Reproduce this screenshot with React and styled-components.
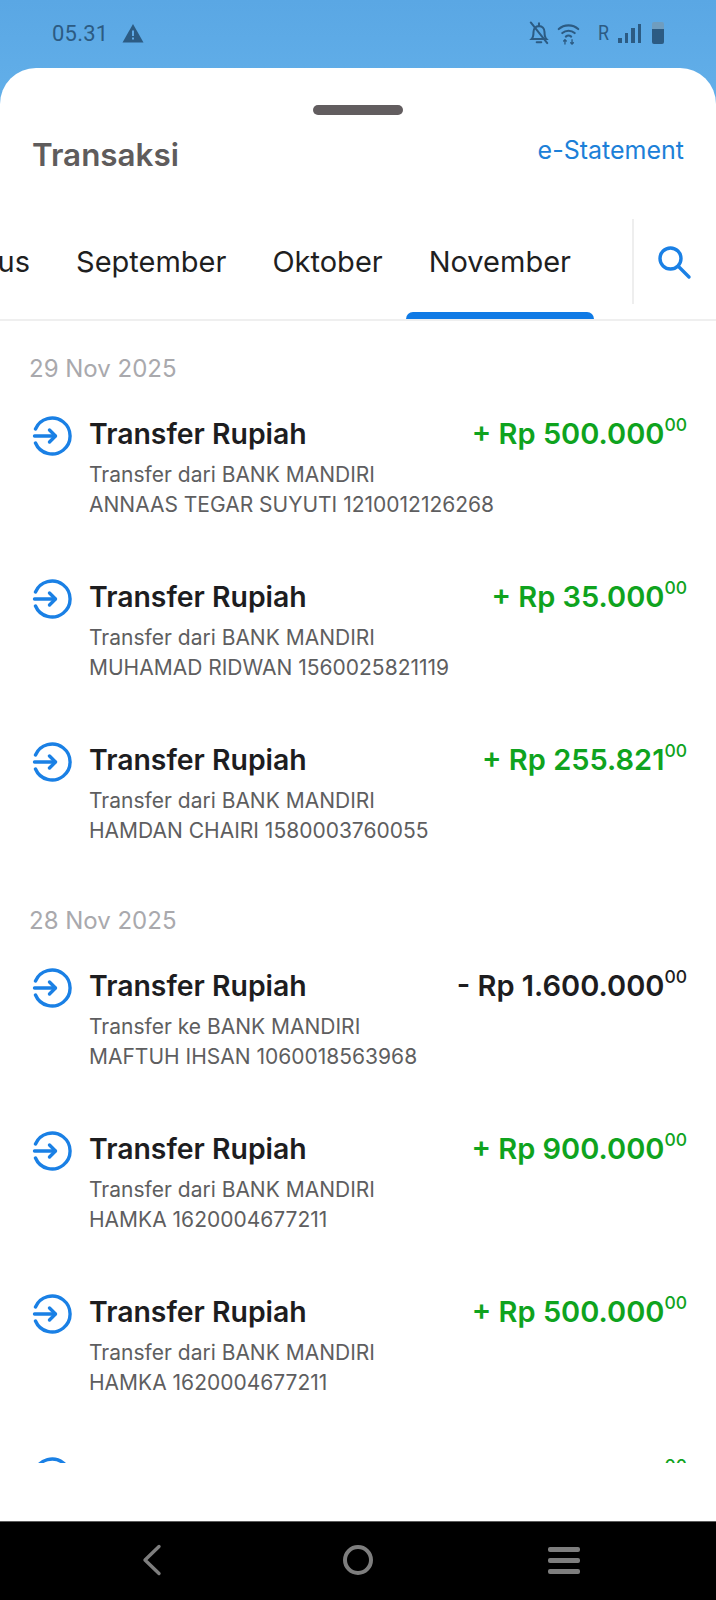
import React from 'react'
import styled, { createGlobalStyle } from 'styled-components'

const GlobalStyle = createGlobalStyle`
    html, body {
        margin: 0;
        padding: 0;
        background: #000;
    }
    body {
        font-family: "Inter", "Noto Sans", "Liberation Sans", sans-serif;
    }
`

const months = [
    { name: 'Agustus' },
    { name: 'September' },
    { name: 'Oktober' },
    { name: 'November', active: true },
]

const groups = [
    {
        date: '29 Nov 2025',
        items: [
            { amount: '+ Rp 500.000', line1: 'Transfer dari BANK MANDIRI', line2: 'ANNAAS TEGAR SUYUTI 1210012126268', income: true },
            { amount: '+ Rp 35.000', line1: 'Transfer dari BANK MANDIRI', line2: 'MUHAMAD RIDWAN 1560025821119', income: true },
            { amount: '+ Rp 255.821', line1: 'Transfer dari BANK MANDIRI', line2: 'HAMDAN CHAIRI 1580003760055', income: true },
        ],
    },
    {
        date: '28 Nov 2025',
        items: [
            { amount: '- Rp 1.600.000', line1: 'Transfer ke BANK MANDIRI', line2: 'MAFTUH IHSAN 1060018563968' },
            { amount: '+ Rp 900.000', line1: 'Transfer dari BANK MANDIRI', line2: 'HAMKA 1620004677211', income: true },
            { amount: '+ Rp 500.000', line1: 'Transfer dari BANK MANDIRI', line2: 'HAMKA 1620004677211', income: true },
            { amount: '+ Rp 750.000', line1: 'Transfer dari BANK MANDIRI', line2: 'HAMKA 1620004677211', income: true },
        ],
    },
]

function TransferIcon() {
    return (
        <svg width="40" height="40" viewBox="0 0 40 40" fill="none" stroke="#1a80e5" strokeWidth="3.4" strokeLinecap="round" strokeLinejoin="round">
            <path d="M3.5 13A18 18 0 1 1 3.5 27" />
            <path d="M2.5 20H23" />
            <path d="M17.5 14L23.5 20L17.5 26" />
        </svg>
    )
}

function StatusIcons() {
    return (
        <StatusRight>
            <svg width="22" height="24" viewBox="0 0 24 26" fill="none" stroke="#2c5b83" strokeWidth="2.2" strokeLinecap="round">
                <path d="M4 19.5C6 17.5 6 15 6 12C6 8 8.5 5.5 12 5.5C15.5 5.5 18 8 18 12C18 15 18 17.5 20 19.5Z" />
                <path d="M12 2.5V5" />
                <path d="M9.5 23H14.5" />
                <path d="M3 1.5L21 24" />
            </svg>
            <svg width="23" height="23" viewBox="0 0 26 26" fill="none" stroke="#2c5b83" strokeWidth="2.4" strokeLinecap="round">
                <path d="M2 8C8 2.5 18 2.5 24 8" />
                <path d="M6 12.5C10 9 16 9 20 12.5" />
                <path d="M10 16.5C11.8 15 14.2 15 16 16.5" />
                <path d="M9 20V25M7.5 21.5L9 20L10.5 21.5" strokeWidth="1.5" />
                <path d="M17 20V25M15.5 23.5L17 25L18.5 23.5" strokeWidth="1.5" />
            </svg>
            <RoamingMark>R</RoamingMark>
            <Signal>
                <SignalBar $h={5} />
                <SignalBar $h={10} />
                <SignalBar $h={15} />
                <SignalBar $h={19} />
            </Signal>
            <Battery />
        </StatusRight>
    )
}

function App() {
    return (
        <Screen>
            <GlobalStyle />
            <StatusBar>
                <StatusLeft>
                    <Clock>05.31</Clock>
                    <svg width="22" height="20" viewBox="0 0 22 20">
                        <path d="M11 1L21.5 19.5H0.5Z" fill="#2c5b83" />
                        <path d="M10 7.5H12V13H10ZM10 14.5H12V16.5H10Z" fill="#5ea9e6" />
                    </svg>
                </StatusLeft>
                <StatusIcons />
            </StatusBar>
            <Sheet>
                <HandleRow>
                    <Handle />
                </HandleRow>
                <Header>
                    <Title>Transaksi</Title>
                    <StatementLink>e-Statement</StatementLink>
                </Header>
                <TabsBar>
                    <Tabs>
                        {months.map((m) => (
                            <Tab key={m.name} $active={m.active}>{m.name}</Tab>
                        ))}
                    </Tabs>
                    <SearchBox>
                        <svg width="36" height="36" viewBox="0 0 36 36" fill="none" stroke="#1a80e5" strokeWidth="3.4" strokeLinecap="round">
                            <circle cx="14.5" cy="14.5" r="10.5" />
                            <path d="M22.5 22.5L33 33" />
                        </svg>
                    </SearchBox>
                </TabsBar>
                <List>
                    {groups.map((group) => (
                        <Group key={group.date}>
                            <DateLabel>{group.date}</DateLabel>
                            {group.items.map((item, index) => (
                                <Row key={index}>
                                    <IconCell>
                                        <TransferIcon />
                                    </IconCell>
                                    <RowBody>
                                        <RowTop>
                                            <RowTitle>Transfer Rupiah</RowTitle>
                                            <Amount $income={item.income}>
                                                {item.amount}<Cents>00</Cents>
                                            </Amount>
                                        </RowTop>
                                        <RowDetail>{item.line1}</RowDetail>
                                        <RowDetail>{item.line2}</RowDetail>
                                    </RowBody>
                                </Row>
                            ))}
                        </Group>
                    ))}
                </List>
            </Sheet>
            <NavBar>
                <svg width="24" height="32" viewBox="0 0 24 32" fill="none" stroke="#7e7e7e" strokeWidth="3.4" strokeLinecap="round" strokeLinejoin="round">
                    <path d="M19 2.5L5 16L19 29.5" />
                </svg>
                <HomeRing />
                <MenuLines>
                    <MenuLine />
                    <MenuLine />
                    <MenuLine />
                </MenuLines>
            </NavBar>
        </Screen>
    )
}

export default App

const Screen = styled.div`
    width: 716px;
    height: 1600px;
    display: flex;
    flex-direction: column;
    overflow: hidden;
    background: linear-gradient(180deg, #5aa7e4 0%, #62afe9 100px);
`
const StatusBar = styled.div`
    height: 68px;
    flex-shrink: 0;
    display: flex;
    align-items: center;
    justify-content: space-between;
    padding: 0 52px 2px 52px;
    box-sizing: border-box;
`
const StatusLeft = styled.div`
    display: flex;
    align-items: center;
    gap: 14px;
`
const Clock = styled.span`
    font-family: "Roboto", sans-serif;
    font-size: 22px;
    color: #2c5b83;
    letter-spacing: 0.2px;
`
const StatusRight = styled.div`
    display: flex;
    align-items: center;
    gap: 7px;
`
const RoamingMark = styled.span`
    font-family: "Roboto", sans-serif;
    font-size: 21px;
    color: #2c5b83;
    margin: 0 1px 0 10px;
    transform: scaleX(0.85);
`
const Signal = styled.div`
    display: flex;
    align-items: flex-end;
    gap: 3px;
    height: 19px;
`
const SignalBar = styled.div`
    width: 3.5px;
    height: ${(p) => p.$h}px;
    background: #2c5b83;
`
const Battery = styled.div`
    width: 12px;
    height: 22px;
    margin-left: 4px;
    border-radius: 2px;
    background: linear-gradient(180deg, #6f9dbf 0 30%, #2c5b83 30% 100%);
`
const Sheet = styled.div`
    flex: 1;
    min-height: 0;
    display: flex;
    flex-direction: column;
    background: #fff;
    border-radius: 36px 36px 0 0;
`
const HandleRow = styled.div`
    display: flex;
    justify-content: center;
    flex-shrink: 0;
    padding-top: 37px;
`
const Handle = styled.div`
    width: 90px;
    height: 10px;
    border-radius: 5px;
    background: #625d5f;
`
const Header = styled.div`
    display: flex;
    justify-content: space-between;
    align-items: flex-start;
    flex-shrink: 0;
    padding: 0 32px;
    height: 100px;
`
const Title = styled.h1`
    margin: 18px 0 0;
    font-size: 31.4px;
    line-height: 44px;
    font-weight: 600;
    color: #5f5c5c;
`
const StatementLink = styled.a`
    margin-top: 19px;
    font-size: 25px;
    line-height: 32px;
    color: #1c80d8;
`
const TabsBar = styled.div`
    height: 106px;
    flex-shrink: 0;
    display: flex;
    box-sizing: border-box;
    border-bottom: 2px solid #efefef;
`
const Tabs = styled.div`
    width: 632px;
    flex-shrink: 0;
    display: flex;
    justify-content: flex-end;
    overflow: hidden;
    padding-right: 38px;
    box-sizing: border-box;
`
const Tab = styled.div`
    position: relative;
    flex-shrink: 0;
    height: 104px;
    padding: 0 23px 12px;
    display: flex;
    align-items: center;
    box-sizing: border-box;
    font-size: 29px;
    color: #1f1f1f;
    &::after {
        content: '';
        display: ${(p) => (p.$active ? 'block' : 'none')};
        position: absolute;
        left: 0;
        right: 0;
        bottom: 0;
        height: 7px;
        border-radius: 7px 7px 0 0;
        background: #0f7ae5;
    }
`
const SearchBox = styled.div`
    flex: 1;
    height: 85px;
    margin-top: 4px;
    border-left: 2px solid #eeeeee;
    display: flex;
    align-items: center;
    padding-left: 22px;
`
const List = styled.div`
    height: 1142px;
    flex-shrink: 0;
    overflow: hidden;
    padding: 0 29px 0 29px;
    box-sizing: border-box;
`
const Group = styled.div`
    padding-top: 33px;
    &:last-child {
        padding-top: 13px;
    }
`
const DateLabel = styled.div`
    font-size: 24px;
    line-height: 30px;
    color: #a9a9ad;
    margin-bottom: 20px;
`
const Row = styled.div`
    height: 163px;
    display: flex;
    padding-top: 8px;
    box-sizing: border-box;
`
const IconCell = styled.div`
    width: 60px;
    flex-shrink: 0;
    box-sizing: border-box;
    padding: 4px 0 0 3px;
`
const RowBody = styled.div`
    flex: 1;
    min-width: 0;
`
const RowTop = styled.div`
    display: flex;
    justify-content: space-between;
    align-items: flex-start;
    margin-bottom: 4px;
`
const RowTitle = styled.div`
    font-size: 28.4px;
    line-height: 44px;
    font-weight: 600;
    color: #1d1d1f;
`
const Amount = styled.div`
    font-size: 29px;
    line-height: 44px;
    font-weight: 600;
    color: ${(p) => (p.$income ? '#0fa31e' : '#1d1d1f')};
    display: flex;
`
const Cents = styled.span`
    font-size: 17.5px;
    line-height: 26px;
    font-weight: 500;
`
const RowDetail = styled.div`
    font-size: 21px;
    line-height: 29.5px;
    color: #5e5e60;
`
const NavBar = styled.div`
    height: 79px;
    flex-shrink: 0;
    display: grid;
    grid-template-columns: repeat(3, 206px);
    justify-content: center;
    justify-items: center;
    align-items: center;
    background: #000;
    border-top: 1px solid #5c5c5c;
    box-sizing: border-box;
    padding-bottom: 2px;
`
const HomeRing = styled.div`
    width: 30px;
    height: 30px;
    box-sizing: border-box;
    border: 4px solid #7e7e7e;
    border-radius: 50%;
`
const MenuLines = styled.div`
    display: flex;
    flex-direction: column;
    gap: 6px;
`
const MenuLine = styled.div`
    width: 32px;
    height: 5px;
    border-radius: 2px;
    background: #7e7e7e;
`
